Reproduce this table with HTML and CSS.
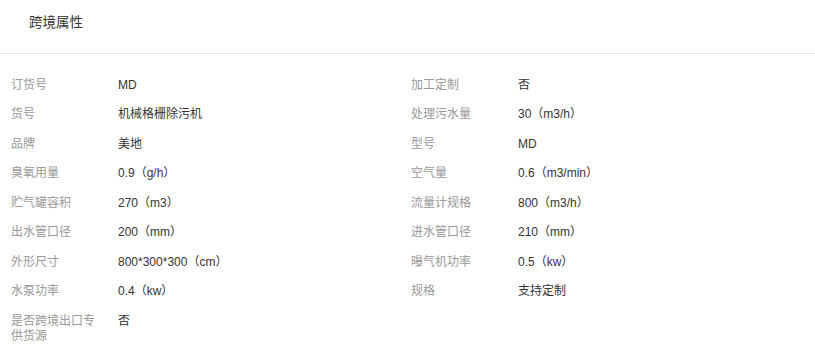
FILE: index.html
```html
<!DOCTYPE html>
<html lang="zh-CN">
<head>
<meta charset="utf-8">
<title>跨境属性</title>
<link rel="stylesheet" href="styles.css">
</head>
<body>
<div class="panel">
  <div class="panel-head"><span class="panel-title">跨境属性</span></div>
  <div class="attr-grid">
    <div class="attr"><div class="attr-label">订货号</div><div class="attr-value">MD</div></div>
    <div class="attr"><div class="attr-label">加工定制</div><div class="attr-value">否</div></div>
    <div class="attr"><div class="attr-label">货号</div><div class="attr-value">机械格栅除污机</div></div>
    <div class="attr"><div class="attr-label">处理污水量</div><div class="attr-value">30（m3/h）</div></div>
    <div class="attr"><div class="attr-label">品牌</div><div class="attr-value">美地</div></div>
    <div class="attr"><div class="attr-label">型号</div><div class="attr-value">MD</div></div>
    <div class="attr"><div class="attr-label">臭氧用量</div><div class="attr-value">0.9（g/h）</div></div>
    <div class="attr"><div class="attr-label">空气量</div><div class="attr-value">0.6（m3/min）</div></div>
    <div class="attr"><div class="attr-label">贮气罐容积</div><div class="attr-value">270（m3）</div></div>
    <div class="attr"><div class="attr-label">流量计规格</div><div class="attr-value">800（m3/h）</div></div>
    <div class="attr"><div class="attr-label">出水管口径</div><div class="attr-value">200（mm）</div></div>
    <div class="attr"><div class="attr-label">进水管口径</div><div class="attr-value">210（mm）</div></div>
    <div class="attr"><div class="attr-label">外形尺寸</div><div class="attr-value">800*300*300（cm）</div></div>
    <div class="attr"><div class="attr-label">曝气机功率</div><div class="attr-value">0.5（kw）</div></div>
    <div class="attr"><div class="attr-label">水泵功率</div><div class="attr-value">0.4（kw）</div></div>
    <div class="attr"><div class="attr-label">规格</div><div class="attr-value">支持定制</div></div>
    <div class="attr"><div class="attr-label">是否跨境出口专供货源</div><div class="attr-value">否</div></div>
  </div>
</div>
</body>
</html>
```

FILE: styles.css
```css
html, body {
  margin: 0;
  padding: 0;
  background: #fff;
}
body {
  font-family: "Liberation Sans", "Noto Sans CJK SC", sans-serif;
  font-size: 12px;
  color: #333;
}
.panel-head {
  height: 53px;
  border-bottom: 1px solid #e5e5e5;
  padding-left: 29px;
  box-sizing: content-box;
}
.panel-title {
  display: inline-block;
  font-size: 13.5px;
  line-height: 20px;
  padding-top: 13px;
  color: #333;
}
.attr-grid {
  display: grid;
  grid-template-columns: 400px 400px;
  padding: 23.5px 0 0 11px;
}
.attr {
  display: flex;
  align-items: flex-start;
  line-height: 15px;
  padding-bottom: 14.5px;
}
.attr-label {
  width: 90px;
  margin-right: 17px;
  color: #999;
  flex: none;
}
.attr-value {
  color: #333;
}
```
